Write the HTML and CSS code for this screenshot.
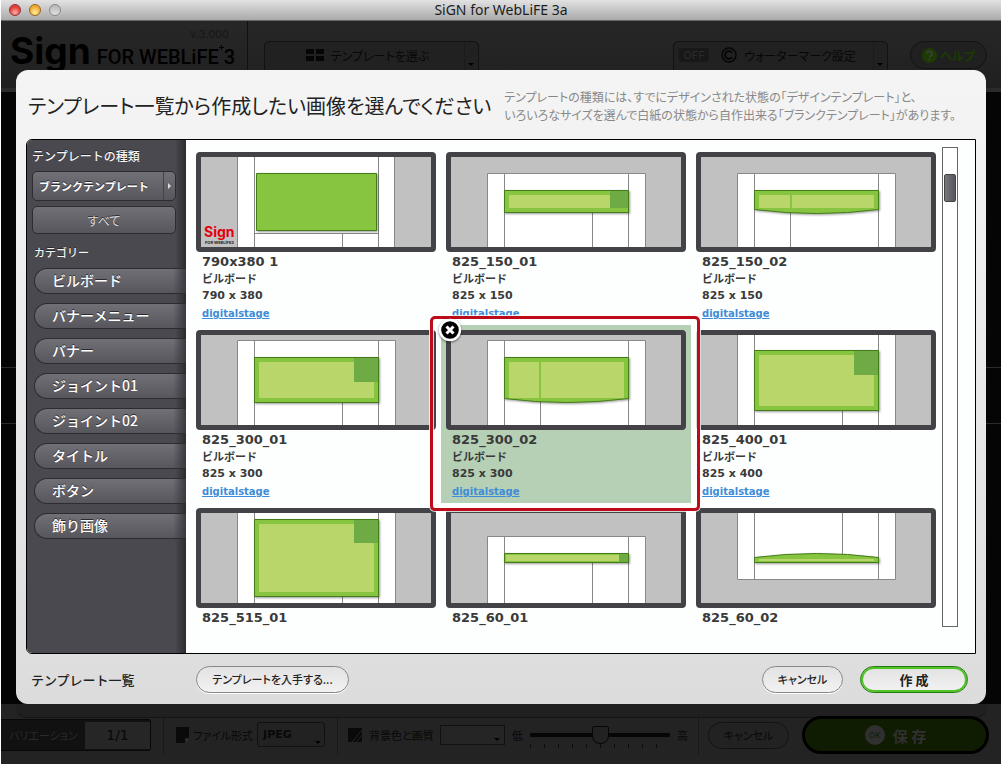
FILE: index.html
```html
<!DOCTYPE html>
<html lang="ja">
<head>
<meta charset="utf-8">
<title>SiGN for WebLiFE 3a</title>
<link rel="stylesheet" href="styles.css">
</head>
<body>
<div class="window">
  <div class="titlebar">
    <div class="lights">
      <span class="light light-red"></span><span class="light light-yellow"></span><span class="light light-gray"></span>
    </div>
    <span class="window-title">SiGN for WebLiFE 3a</span>
  </div>

  <header class="toolbar">
    <div class="brand">
      <span class="version">v.3.000</span>
      <span class="brand-row"><span class="brand-main">Sign</span><span class="brand-sub">FOR WEBLiFE</span><svg class="brand-mark" width="5" height="5" viewBox="0 0 5 5" aria-hidden="true"><path d="M2.500 0v5M0 2.500h5" stroke="#000"/></svg><span class="brand-sub">3</span></span>
    </div>
    <div class="tools">
      <button class="tool tool-template" type="button">
        <svg width="18" height="12" viewBox="0 0 18 12" aria-hidden="true"><path d="M0 0h8v5H0zM10 0h8v5h-8zM0 7h8v5H0zM10 7h8v5h-8z" fill="#050505"/></svg>
        <span>テンプレートを選ぶ</span><i class="caret"></i>
      </button>
      <button class="tool tool-mark" type="button">
        <span class="off">OFF</span>
        <svg width="16" height="16" viewBox="0 0 16 16" aria-hidden="true"><circle cx="8" cy="8" r="7" fill="none" stroke="#050505" stroke-width="1.4"/><path d="M11 5.6a3.9 3.9 0 1 0 0 4.8" fill="none" stroke="#050505" stroke-width="1.8"/></svg>
        <span>ウォーターマーク設定</span><i class="caret"></i>
      </button>
      <button class="help" type="button">
        <svg width="15" height="15" viewBox="0 0 15 15" aria-hidden="true"><circle cx="7.500" cy="7.500" r="7.500" fill="#1c3a02"/><path d="M5 5.800a2.500 2.300 0 1 1 3.600 2.100q-1.100.5-1.100 1.500" fill="none" stroke="#3a3f36" stroke-width="1.900"/><circle cx="7.500" cy="11.600" r="1.100" fill="#3a3f36"/></svg>
        <span>ヘルプ</span>
      </button>
    </div>
  </header>

  <div class="canvas"><div class="canvas-band"></div></div>

  <footer class="bottombar">
    <div class="shelf"></div>
    <div class="controls">
      <label class="variation"><span>バリエーション</span><input type="text" value="1/1"></label>
      <div class="group group-format">
        <svg width="13" height="16" viewBox="0 0 13 16" aria-hidden="true"><path d="M0 0h13v11H9v5H0z" fill="#0a0a0a"/><path d="M10 12h3l-3 4z" fill="#333"/></svg>
        <label for="format">ファイル形式</label>
        <span class="picker"><select id="format"><option>JPEG</option></select><i class="caret"></i></span>
      </div>
      <div class="group group-quality">
        <svg width="14" height="14" viewBox="0 0 14 14" aria-hidden="true"><path d="M0 0h14v14H0z" fill="#0a0a0a"/><path d="M14 2L4 14M14 7L8 14" stroke="#242424" stroke-width="1"/></svg>
        <span class="bg-label">背景色と画質</span>
        <button class="swatch" type="button" aria-label="背景色"><i class="caret"></i></button>
        <label class="low" for="quality">低</label>
        <span class="slider"><input id="quality" type="range" min="0" max="10" value="5"><span class="ticks"></span></span>
        <span>高</span>
      </div>
      <div class="group group-actions">
        <button class="dim-cancel" type="button">キャンセル</button>
        <button class="save" type="button"><span class="ok">OK</span><span>保 存</span></button>
      </div>
    </div>
  </footer>

  <main class="dialog" role="dialog" aria-labelledby="dialog-title">
    <div class="dialog-head">
      <h1 id="dialog-title">テンプレート一覧から作成したい画像を選んでください</h1>
      <p>テンプレートの種類には、すでにデザインされた状態の「デザインテンプレート」と、<br>いろいろなサイズを選んで白紙の状態から自作出来る「ブランクテンプレート」があります。</p>
    </div>

    <div class="panel">
      <nav class="sidebar">
        <h2>テンプレートの種類</h2>
        <button class="kind" type="button"><span>ブランクテンプレート</span><i><svg width="3" height="6" viewBox="0 0 3 6" aria-hidden="true"><path d="M0 0l3 3-3 3z" fill="#ddd"/></svg></i></button>
        <button class="all" type="button">すべて</button>
        <h3>カテゴリー</h3>
        <div class="cats">
          <button type="button">ビルボード</button>
          <button type="button">バナーメニュー</button>
          <button type="button">バナー</button>
          <button type="button">ジョイント01</button>
          <button type="button">ジョイント02</button>
          <button type="button">タイトル</button>
          <button type="button">ボタン</button>
          <button type="button">飾り画像</button>
        </div>
      </nav>

      <div class="browser">
        <div class="grid">
          <article class="card">
            <svg class="thumb" viewBox="0 0 230 90"><path class="page" d="M36.500-1v92h157v-92z"/><path class="rule" d="M53.500 0v90M177.500 0v90M53.500 76.500h124M141.500 76v14"/><path class="shape" d="M55.500 16.500h120v57h-120z"/><text class="mini-logo" x="3" y="80">Sign</text><text class="mini-sub" x="4" y="87">FOR WEBLiFE3</text></svg>
            <h4>790x380 1</h4><p class="type">ビルボード</p><p class="size">790 x 380</p><a href="#">digitalstage</a>
          </article>
          <article class="card">
            <svg class="thumb" viewBox="0 0 230 90"><path class="page" d="M36.500 16.500h158v75h-158z"/><path class="rule" d="M53.500 17v73M177.500 17v73M141.500 50v40"/><path class="shape" d="M53.500 33.500h124v22h-124z"/><path class="light-area" d="M58 38h101v13H58z"/><path class="corner" d="M159 34h18v17h-18z"/></svg>
            <h4>825_150_01</h4><p class="type">ビルボード</p><p class="size">825 x 150</p><a href="#">digitalstage</a>
          </article>
          <article class="card">
            <svg class="thumb" viewBox="0 0 230 90"><path class="page" d="M36.500 16.500h158v75h-158z"/><path class="rule" d="M53.500 17v73M177.500 17v73M89.500 50v40"/><path class="shape" d="M53.500 33.500h124v19q-62 8-124 0z"/><path class="light-area" d="M58 38h31v13H58zM91 38h82v13H91z"/></svg>
            <h4>825_150_02</h4><p class="type">ビルボード</p><p class="size">825 x 150</p><a href="#">digitalstage</a>
          </article>
          <article class="card">
            <svg class="thumb" viewBox="0 0 230 90"><path class="page" d="M36.500 5.500h158v86h-158z"/><path class="rule" d="M53.500 6v84M177.500 6v84M141.500 60v30"/><path class="shape" d="M53.500 22.500h124v45h-124z"/><path class="light-area" d="M58 27h115v36H58z"/><path class="corner" d="M153 23h24v24h-24z"/></svg>
            <h4>825_300_01</h4><p class="type">ビルボード</p><p class="size">825 x 300</p><a href="#">digitalstage</a>
          </article>
          <article class="card selected">
            <button class="close" type="button" aria-label="閉じる"><svg width="24" height="24" viewBox="0 0 24 24"><circle cx="12" cy="12" r="10" fill="#000" stroke="#fff" stroke-width="2.400"/><path d="M8.500 8.500l7 7M15.500 8.500l-7 7" stroke="#fff" stroke-width="3"/></svg></button>
            <svg class="thumb" viewBox="0 0 230 90"><path class="page" d="M36.500 5.500h158v86h-158z"/><path class="rule" d="M53.500 6v84M177.500 6v84M89.500 60v30"/><path class="shape" d="M53.500 22.500h124v41q-62 8-124 0z"/><path class="light-area" d="M58 27h30v36H58zM90 27h83v36H90z"/></svg>
            <h4>825_300_02</h4><p class="type">ビルボード</p><p class="size">825 x 300</p><a href="#">digitalstage</a>
          </article>
          <article class="card">
            <svg class="thumb" viewBox="0 0 230 90"><path class="page" d="M36.500-1v92h158v-92z"/><path class="rule" d="M53.500 0v90M177.500 0v90M141.500 70v20"/><path class="shape" d="M53.500 15.500h124v60h-124z"/><path class="light-area" d="M58 20h115v51H58z"/><path class="corner" d="M153 16h24v24h-24z"/></svg>
            <h4>825_400_01</h4><p class="type">ビルボード</p><p class="size">825 x 400</p><a href="#">digitalstage</a>
          </article>
          <article class="card">
            <svg class="thumb" viewBox="0 0 230 90"><path class="page" d="M36.500-1v92h158v-92z"/><path class="rule" d="M53.500 0v90M177.500 0v90M141.500 80v10"/><path class="shape" d="M53.500 6.500h124v77h-124z"/><path class="light-area" d="M58 11h115v68H58z"/><path class="corner" d="M153 7h24v23h-24z"/></svg>
            <h4>825_515_01</h4>
          </article>
          <article class="card">
            <svg class="thumb" viewBox="0 0 230 90"><path class="page" d="M36.500 23.500h158v68h-158z"/><path class="rule" d="M53.500 24v66M177.500 24v66M141.500 46v44"/><path class="shape" d="M53.500 40.500h124v9h-124z"/><path class="light-area" d="M55 42h113v6H55z"/><path class="corner" d="M168 41h9v8h-9z"/></svg>
            <h4>825_60_01</h4>
          </article>
          <article class="card">
            <svg class="thumb" viewBox="0 0 230 90"><path class="page" d="M36.500-1v67.500h158v-67.500z"/><path class="rule" d="M53.500 0v66M177.500 0v66M141.500 0v44"/><path class="shape" d="M53.500 49.500v-5q62-8 124 0v5z"/><path class="light-area" d="M58 46h115v2H58z"/></svg>
            <h4>825_60_02</h4>
          </article>
        </div>
        <div class="scroll"><div class="scroll-thumb"></div></div>
      </div>
    </div>

    <div class="dialog-foot">
      <span class="foot-title">テンプレート一覧</span>
      <button class="pill get" type="button">テンプレートを入手する...</button>
      <button class="pill cancel" type="button">キャンセル</button>
      <button class="pill create" type="button">作 成</button>
    </div>
  </main>
</div>
</body>
</html>
```

FILE: styles.css
```css
* { box-sizing: border-box; }
body, h1, h2, h3, h4, p { margin: 0; }
body {
  background: #fff;
  font-family: "Noto Sans CJK JP", sans-serif;
  font-size: 11px;
  font-feature-settings: "palt";
}
button, input, select { font: inherit; font-feature-settings: inherit; margin: 0; }
button { display: flex; align-items: center; border: 0; padding: 0; }

.window {
  position: relative;
  display: flex;
  flex-direction: column;
  height: 100vh;
  min-height: 700px;
  margin-left: 1px;
  background: #050505;
  overflow: hidden;
}

.titlebar {
  display: grid;
  grid-template-columns: 1fr auto 1fr;
  align-items: center;
  height: 21px;
  background: linear-gradient(#e2e2e2, #aaa);
  border-bottom: 1px solid #666;
}
.lights { display: flex; gap: 8px; padding-left: 8px; }
.light { width: 12px; height: 12px; border-radius: 50%; border: 1px solid #777; }
.light-red { background: radial-gradient(circle at 50% 75%, #ffb0a8, #e3403c 60%); border-color: #98302e; }
.light-yellow { background: radial-gradient(circle at 50% 75%, #fff0a0, #eda92f 65%); border-color: #99651c; }
.light-gray { background: linear-gradient(#b5b5b5, #e2e2e2); border-color: #888; }
.window-title { font: 14px/20px "Noto Sans", sans-serif; color: #1c1c1c; }

.toolbar {
  display: flex;
  height: 71px;
  background: linear-gradient(#272727, #202020);
  border-bottom: 4px solid #2b2b2b;
  color: #070707;
}
.brand { display: flex; flex-direction: column; width: 247px; padding: 6px 0 0 9px; border-right: 1px solid #111; white-space: nowrap; }
.version { align-self: flex-end; margin-right: 18px; font: 11px/14px "Inter", sans-serif; color: #161616; }
.brand-row { display: flex; align-items: baseline; line-height: 20px; color: #000; font-family: "Inter", sans-serif; }
.brand-main { font-size: 37px; font-weight: 700; margin-right: 6px; }
.brand-sub { font-family: "Roboto", sans-serif; font-size: 20px; font-weight: 500; }
.brand-mark { align-self: flex-start; margin-top: 4px; }
.tools { display: flex; flex: 1; align-items: flex-start; padding: 20px 14px 0 16px; }
.tool {
  position: relative;
  gap: 7px;
  height: 44px;
  width: 215px;
  padding-bottom: 16px;
  justify-content: center;
  border: 1px solid #121212;
  border-radius: 5px;
  background: #212121;
  color: #070707;
  font-size: 12px;
}
.tool::after { content: ""; position: absolute; right: 13px; top: 1px; bottom: 1px; border-left: 1px solid #1b1b1b; }
.tool .caret { top: 21px; }
.caret { position: absolute; right: 4px; bottom: 3px; border: 3px solid transparent; border-top-color: #000; border-bottom: 0; }
.tool-template { padding-right: 8px; }
.tool-mark { margin-left: auto; padding-right: 26px; }
.off { width: 30px; margin-right: 5px; border-radius: 3px; background: #181818; color: #2b2b2b; font: 11px/14px "Inter", sans-serif; }
.help { gap: 3px; justify-content: center; width: 77px; height: 28px; margin-left: 22px; border: 1px solid #131313; border-radius: 14px; background: #202020; color: #1c3a02; font-size: 12px; font-weight: 700; }

.canvas { flex: 1; display: flex; flex-direction: column; justify-content: center; padding-bottom: 6px; }
.canvas-band { height: 57px; border: solid #2b2b2b; border-width: 1px 0; }

.bottombar { height: 60px; background: #232323; color: #080808; }
.shelf { height: 14px; margin: 0 14px 0 15px; border-bottom: 1px solid #151515; border-radius: 0 0 12px 12px; background: #202020; }
.controls { display: flex; align-items: center; height: 34px; }
.variation { display: flex; align-items: center; width: 150px; height: 32px; background: #111; border: 1px solid #080808; border-left: 0; border-radius: 0 3px 3px 0; color: #2a2a2a; }
.variation span { width: 84px; padding-left: 8px; white-space: nowrap; }
.variation input { flex: 1; width: 0; height: 27px; border: 0; background: #262626; color: #080808; text-align: center; font: 14px "DejaVu Sans", sans-serif; }
.group { display: flex; align-items: center; height: 40px; border-left: 1px solid #191919; white-space: nowrap; }
.group-format { margin-left: 12px; padding-left: 12px; gap: 4px; width: 174px; }
.picker { position: relative; width: 68px; height: 25px; margin-bottom: 2px; }
.picker select { appearance: none; width: 100%; height: 100%; padding: 0 5px; border: 1px solid #111; border-radius: 3px; background: #222; color: #080808; font: bold 11px "DejaVu Sans", sans-serif; }
.group-quality { width: 361px; padding: 0 10px; gap: 7px; }
.bg-label { width: 64px; }
.swatch { position: relative; width: 65px; height: 20px; border: 1px solid #111; background: #252525; }
.slider { display: flex; flex-direction: column; flex: 1; min-width: 0; padding-top: 4px; }
.slider input { appearance: none; width: 100%; height: 18px; background: linear-gradient(#060606, #060606) center / 100% 4px no-repeat; }
.slider input::-webkit-slider-thumb { appearance: none; width: 17px; height: 18px; background: #222; border: 1px solid #060606; border-radius: 2px 2px 8px 8px; }
.ticks { height: 4px; background: repeating-linear-gradient(90deg, #0c0c0c 0 1px, transparent 1px 14px); }
.group-actions { flex: 1; padding: 0 12px 0 9px; justify-content: space-between; }
.dim-cancel { justify-content: center; width: 81px; height: 27px; border: 1px solid #131313; border-radius: 14px; background: #222; color: #080808; }
.save { justify-content: center; gap: 8px; width: 187px; height: 38px; border: 3px solid #000; border-radius: 19px; background: #101c02; color: #303030; font-size: 15px; font-weight: 700; }
.ok { width: 20px; height: 20px; border-radius: 50%; background: #303030; color: #101c02; font: 8px/20px "Inter", sans-serif; }

.dialog {
  position: absolute;
  inset: 70px 15px 60px 15px;
  display: flex;
  flex-direction: column;
  border-radius: 12px;
  background: linear-gradient(#f4f4f4, #f2f2f2 15%, #dcdcdc);
}
.dialog-head { display: flex; align-items: center; gap: 13px; height: 69px; padding: 2px 12px 0; white-space: nowrap; }
h1 { font-size: 20px; font-weight: 400; color: #222; }
.dialog-head p { font-size: 12px; line-height: 18px; color: #888; }

.panel { display: flex; flex: 1; min-height: 0; margin: 0 10px; border: 1px solid #000; border-radius: 6px 0 0 6px; background: #fdfffe; overflow: hidden; }
.sidebar { width: 159px; padding: 8px 0 0 5px; background: linear-gradient(90deg, transparent 148px, #2c2b30), #4a494f; color: #f4f4f4; text-shadow: 0 -1px 0 #2b2a2e; }
h2 { font-size: 12px; font-weight: 500; line-height: 16px; font-feature-settings: normal; }
h3 { margin: 10px 0 8px 2px; font-size: 11px; font-weight: 500; line-height: 16px; font-feature-settings: normal; }
.kind, .all { width: 144px; border: 1px solid #2d2c31; border-radius: 5px; background: linear-gradient(#717077, #57565d); text-shadow: inherit; }
.kind { height: 30px; margin-top: 7px; padding-left: 6px; color: #fff; font-weight: 700; font-feature-settings: normal; }
.kind span { flex: 1; text-align: left; white-space: nowrap; }
.kind i { display: flex; align-items: center; justify-content: center; width: 12px; height: 28px; border-left: 1px solid #454449; }
.all { justify-content: center; height: 28px; margin-top: 5px; color: #ddd; font-size: 12px; }
.cats { display: flex; flex-direction: column; gap: 9px; padding-left: 2px; }
.cats button { height: 26px; padding: 0 0 2px 17px; border: 1px solid #2d2c31; border-right: 0; border-radius: 13px 0 0 13px; background: linear-gradient(90deg, transparent 138px, #3a393e), linear-gradient(#717077, #57565d); color: #fff; font-size: 14px; font-weight: 500; font-feature-settings: normal; text-shadow: inherit; }

.browser { display: flex; flex: 1; min-width: 0; padding: 7px 17px 26px 5px; }
.grid { flex: 1; display: grid; grid-template-columns: repeat(3, 250px); grid-auto-rows: 178px; overflow: hidden; }
.card { position: relative; padding: 5px; color: #3a3a3a; font-family: "DejaVu Sans", "Noto Sans CJK JP", sans-serif; font-weight: 700; font-feature-settings: normal; }
.card h4, .card p { padding-left: 6px; }
.card h4 { font-size: 13px; line-height: 19px; }
.card .type { font-family: "Noto Sans CJK JP", sans-serif; line-height: 15px; }
.card .size { line-height: 20px; }
.card a { display: block; width: max-content; margin-left: 6px; color: #3f8cd8; font-size: 10px; line-height: 15px; }
.thumb { display: block; width: 240px; height: 100px; border: 5px solid #434247; border-radius: 4px; background: #c1c1c1; }
.page { fill: #fff; stroke: #888; }
.rule { fill: none; stroke: #888; }
.shape { fill: #87c540; stroke: #437d17; filter: drop-shadow(1px 1px 1px #0006); }
.light-area { fill: #b9d66b; }
.corner { fill: #6eab45; }
.mini-logo { fill: #e3000f; font: 700 14px "Inter", sans-serif; }
.mini-sub { fill: #222; font: 700 4px "Inter", sans-serif; }
.selected { background: #b6d0b5; z-index: 1; }
.selected::after { content: ""; position: absolute; inset: -9px -9px -8px -11px; border: 3px solid #be0b1a; border-radius: 5px; box-shadow: 0 0 0 1px #fffc, inset 0 0 0 1px #fffc; pointer-events: none; }
.close { position: absolute; z-index: 1; left: -3px; top: -7px; background: none; filter: drop-shadow(0 1px 1px #0008); }
.scroll { width: 16px; padding: 26px 1px 0; border: 1px solid #666; background: #fff; }
.scroll-thumb { height: 28px; border: 1px solid #444; border-radius: 2px; background: linear-gradient(90deg, #77767c, #56555b); }

.dialog-foot { display: flex; align-items: center; height: 50px; padding: 0 18px 0 15px; color: #222; }
.foot-title { width: 165px; font-size: 13px; font-weight: 500; font-feature-settings: normal; }
.pill { justify-content: center; height: 27px; border: 1px solid #888; border-radius: 14px; background: linear-gradient(#e2e2e2, #f2f2f2); color: #222; font-weight: 500; box-shadow: 0 1px 0 #fff; }
.get { width: 153px; }
.cancel { width: 81px; margin-left: auto; }
.create { width: 108px; margin-left: 17px; border: 1px solid #237a10; box-shadow: inset 0 0 0 2px #4fc424; font-size: 13px; font-weight: 700; }
```
